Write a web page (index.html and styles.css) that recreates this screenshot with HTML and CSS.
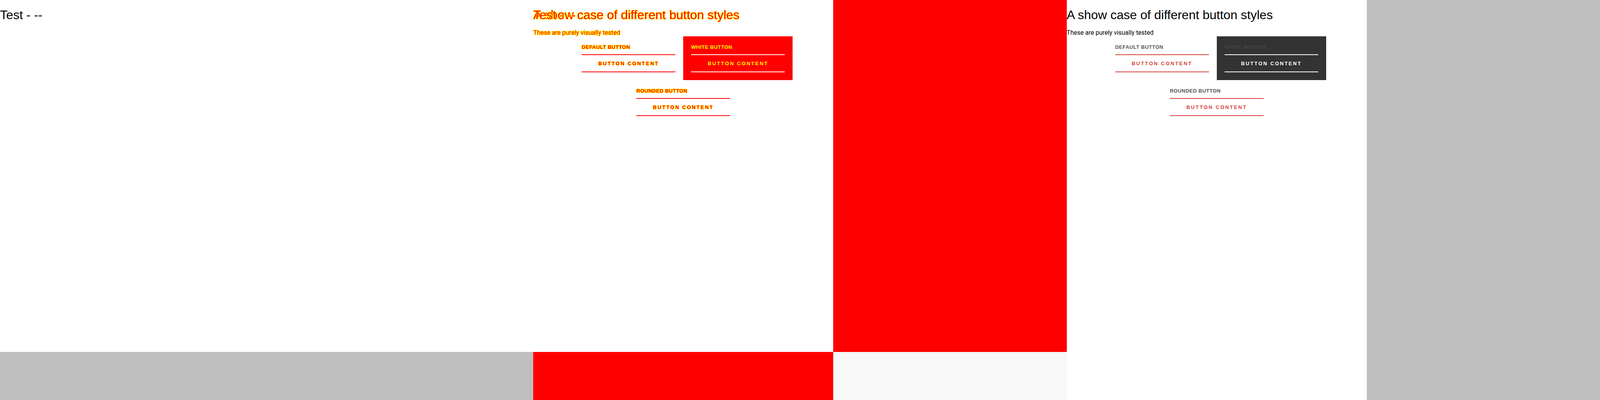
FILE: index.html
```html
<!DOCTYPE html>
<html lang="en">
<head>
<meta charset="utf-8">
<title>Visual diff</title>
<link rel="stylesheet" href="styles.css">
</head>
<body>
<div class="viewer">
  <section class="col col-gray">
    <div class="shot shot-base">
      <h1 class="title">Test - --</h1>
    </div>
  </section>

  <section class="col diff">
    <div class="page diff-page">
      <h1 class="title">A show case of different button styles</h1>
      <p class="lead">These are purely visually tested</p>
      <div class="cards">
        <div class="card">
          <div class="label">Default button</div>
          <div class="btn">Button content</div>
        </div>
        <div class="card card-white">
          <div class="label">White button</div>
          <div class="btn">Button content</div>
        </div>
        <div class="card">
          <div class="label">Rounded button</div>
          <div class="btn">Button content</div>
        </div>
      </div>
      <h1 class="title ghost">Test - --</h1>
    </div>
    <div class="diff-missing"></div>
    <div class="diff-missing"></div>
    <div class="diff-empty"></div>
  </section>

  <section class="col col-gray">
    <div class="shot shot-new">
      <div class="page">
        <h1 class="title">A show case of different button styles</h1>
        <p class="lead">These are purely visually tested</p>
        <div class="cards">
          <div class="card">
            <div class="label">Default button</div>
            <div class="btn">Button content</div>
          </div>
          <div class="card card-white">
            <div class="label">White button</div>
            <div class="btn">Button content</div>
          </div>
          <div class="card">
            <div class="label">Rounded button</div>
            <div class="btn">Button content</div>
          </div>
        </div>
      </div>
    </div>
  </section>
</div>
</body>
</html>
```

FILE: styles.css
```css
* { box-sizing: border-box; }

html, body {
  margin: 0;
  padding: 0;
  background: #ffffff;
  overflow: hidden;
}

body {
  font-family: "Liberation Sans", Arial, sans-serif;
  color: #000;
}

.viewer {
  display: flex;
  width: 100%;
  height: 1024px;
  overflow: hidden;
}

.col {
  flex: 1 1 0;
  min-width: 0;
  height: 1024px;
  overflow: hidden;
}

.col-gray {
  background: #bfbfbf;
}

.shot {
  background: #ffffff;
  overflow: hidden;
}

.shot-base {
  width: 100%;
  height: 901px;
}

.shot-new {
  width: 768px;
  height: 1024px;
}

/* page content */
.page {
  position: relative;
  width: 768px;
  overflow: hidden;
}

.title {
  margin: 20px 0 17px;
  font-family: "Liberation Sans", Arial, sans-serif;
  font-size: 32px;
  font-weight: normal;
  line-height: normal;
}

.lead {
  margin: 0;
  font-family: Roboto, "Liberation Sans", sans-serif;
  font-size: 16px;
  line-height: normal;
}

.cards {
  display: flex;
  flex-wrap: wrap;
  justify-content: center;
}

.card {
  width: 280px;
  padding: 20px;
}

.label {
  font-family: "Liberation Sans", Arial, sans-serif;
  font-size: 13px;
  font-weight: bold;
  letter-spacing: 0.5px;
  line-height: 15px;
  text-transform: uppercase;
  color: #555555;
  margin-bottom: 11px;
}

.btn {
  border-top: 2px solid #d2433b;
  border-bottom: 2px solid #d2433b;
  padding: 14px 0 13px;
  font-family: "Liberation Sans", Arial, sans-serif;
  font-size: 13px;
  font-weight: bold;
  letter-spacing: 2.5px;
  line-height: 15px;
  text-align: center;
  text-transform: uppercase;
  color: #d2433b;
}

.card-white {
  background: #333333;
}

.card-white .label {
  color: #454545;
}

.card-white .btn {
  border-color: #ffffff;
  color: #ffffff;
}

/* diff column */
.diff {
  display: grid;
  grid-template-columns: 768px 1fr;
  grid-template-rows: 901px 1fr;
  background: #f8f8f8;
}

.diff-missing {
  background: #ff0000;
}

.diff-empty {
  background: #f8f8f8;
}

.diff-page {
  background: #ffffff;
  height: 901px;
}

.diff-page .title,
.diff-page .lead,
.diff-page .label,
.diff-page .btn {
  color: #ff0000;
  text-shadow:
    1px 0 0 #ffff00, -1px 0 0 #ffff00, 0 1px 0 #ffff00, 0 -1px 0 #ffff00,
    1px 1px 0 #ffff00, -1px -1px 0 #ffff00, 1px -1px 0 #ffff00, -1px 1px 0 #ffff00;
}

.diff-page .btn {
  border-color: #ff0000;
  text-shadow: 1px 0 0 #ffff00, -1px 0 0 #ffff00, 0 1px 0 #ffff00, 0 -1px 0 #ffff00;
}

.diff-page .card-white {
  background: #ff0000;
}

.diff-page .card-white .label {
  color: #ffff00;
  text-shadow: none;
}

.diff-page .card-white .btn {
  border-color: #ffffff;
  color: #ffff00;
  text-shadow: none;
}

.ghost {
  position: absolute;
  top: 0;
  left: 0;
}
```
